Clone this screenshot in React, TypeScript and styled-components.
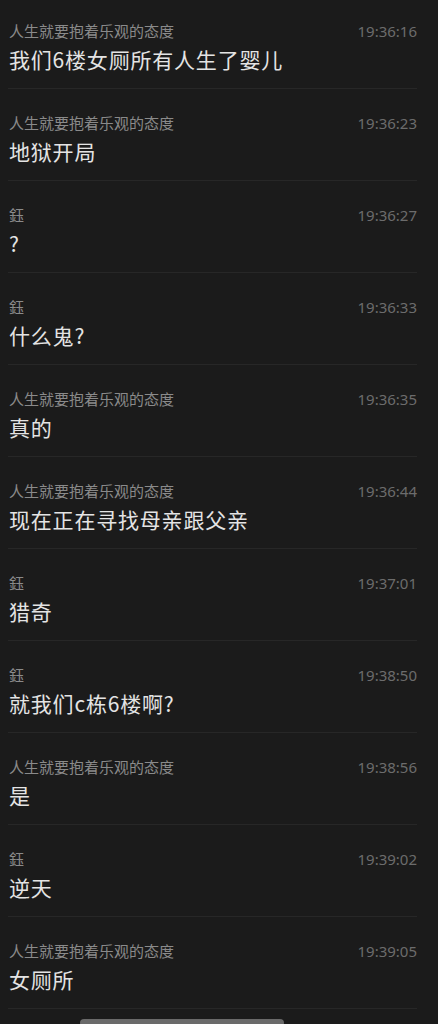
import {FunctionComponent} from "react";
import styled, {createGlobalStyle} from "styled-components";

const GlobalStyle = createGlobalStyle`
  html, body {
    margin: 0;
    padding: 0;
    background: #1b1b1b;
  }
  body {
    font-family: "Noto Sans", "Noto Sans CJK SC", sans-serif;
    -webkit-font-smoothing: antialiased;
  }
`;

const SPage = styled.div`
  min-height: 1024px;
  background: #1b1b1b;
  overflow: hidden;
`;

const SList = styled.div`
  display: flex;
  flex-direction: column;
  margin: 0 21px 0 8px;
`;

const SRow = styled.div`
  display: flex;
  flex-direction: column;
  padding: 25px 0 15px 1px;
  border-bottom: 1px solid #272727;

  &:first-child {
    padding-top: 22px;
  }
`;

const SHeader = styled.div`
  display: flex;
  justify-content: space-between;
  align-items: center;
  height: 18px;
  line-height: 18px;
`;

const SName = styled.span`
  font-family: "Noto Sans CJK SC", sans-serif;
  font-size: 15px;
  line-height: 18px;
  color: #8a8a8a;
`;

const STime = styled.span`
  font-family: "Noto Sans", "Noto Sans CJK SC", sans-serif;
  font-size: 15px;
  line-height: 18px;
  color: #6c6c6c;
`;

const SText = styled.div`
  margin-top: 5px;
  font-family: "Noto Sans CJK SC", sans-serif;
  font-size: 21px;
  line-height: 28px;
  letter-spacing: 0.8px;
  color: #e4e4e4;
`;

const SHomeBar = styled.div`
  position: fixed;
  left: 80px;
  top: 1019px;
  width: 204px;
  height: 8px;
  border-radius: 4px;
  background: #6a6a6a;
`;

type Message = { name: string; time: string; text: string };

const OPTIMIST = "人生就要抱着乐观的态度";
const YU = "鈺";

const messages: Message[] = [
    {name: OPTIMIST, time: "19:36:16", text: "我们6楼女厕所有人生了婴儿"},
    {name: OPTIMIST, time: "19:36:23", text: "地狱开局"},
    {name: YU, time: "19:36:27", text: "?"},
    {name: YU, time: "19:36:33", text: "什么鬼?"},
    {name: OPTIMIST, time: "19:36:35", text: "真的"},
    {name: OPTIMIST, time: "19:36:44", text: "现在正在寻找母亲跟父亲"},
    {name: YU, time: "19:37:01", text: "猎奇"},
    {name: YU, time: "19:38:50", text: "就我们c栋6楼啊?"},
    {name: OPTIMIST, time: "19:38:56", text: "是"},
    {name: YU, time: "19:39:02", text: "逆天"},
    {name: OPTIMIST, time: "19:39:05", text: "女厕所"},
];

const App: FunctionComponent = () => (
    <SPage>
        <GlobalStyle/>
        <SList>
            {messages.map((m, i) => (
                <SRow key={i}>
                    <SHeader>
                        <SName>{m.name}</SName>
                        <STime>{m.time}</STime>
                    </SHeader>
                    <SText>{m.text}</SText>
                </SRow>
            ))}
        </SList>
        <SHomeBar/>
    </SPage>
);

export default App;
